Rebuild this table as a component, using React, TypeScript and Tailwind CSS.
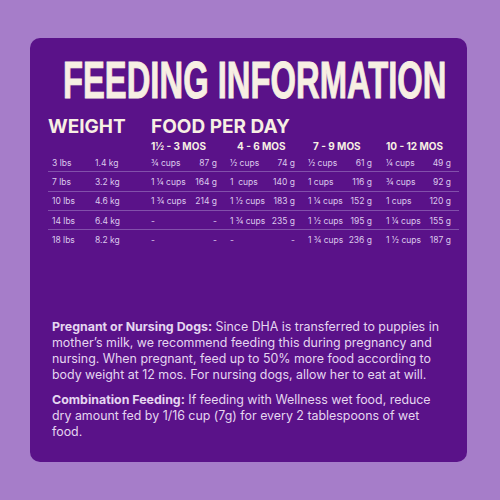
const rows = [
  { lbs: '3 lbs', kg: '1.4 kg', food: [['¾ cups', '87 g'], ['½ cups', '74 g'], ['½ cups', '61 g'], ['¼ cups', '49 g']] },
  { lbs: '7 lbs', kg: '3.2 kg', food: [['1 ¼ cups', '164 g'], ['1  cups', '140 g'], ['1 cups', '116 g'], ['¾ cups', '92 g']] },
  { lbs: '10 lbs', kg: '4.6 kg', food: [['1 ¾ cups', '214 g'], ['1 ½ cups', '183 g'], ['1 ¼ cups', '152 g'], ['1 cups', '120 g']] },
  { lbs: '14 lbs', kg: '6.4 kg', food: [['-', '-'], ['1 ¾ cups', '235 g'], ['1 ½ cups', '195 g'], ['1 ¼ cups', '155 g']] },
  { lbs: '18 lbs', kg: '8.2 kg', food: [['-', '-'], ['-', '-'], ['1 ¾ cups', '236 g'], ['1 ½ cups', '187 g']] },
];

const ages = ['1½ - 3 MOS', '4 - 6 MOS', '7 - 9 MOS', '10 - 12 MOS'];
const foodWidths = ['w-[66px]', 'w-[65px]', 'w-[64px]', 'w-[65px]'];

export default function App() {
  return (
    <div
      className="w-[500px] h-[500px] bg-[#a67dc9] pt-[38px] pl-[30px]"
      style={{ fontFamily: 'Inter, "Liberation Sans", sans-serif' }}
    >
      <div className="w-[437px] h-[424px] rounded-[10px] bg-[#5a1289] flex flex-col">
        {/* title */}
        <div className="pt-[16px] pl-[33px] h-[80px] overflow-hidden">
          <div
            className="inline-block origin-left scale-x-[0.63] text-[52px] leading-[52px] font-bold text-[#f7efe3] whitespace-nowrap [-webkit-text-stroke:1px_#f7efe3]"
            style={{ fontFamily: '"Liberation Sans", Arial, sans-serif' }}
          >
            FEEDING INFORMATION
          </div>
        </div>

        {/* table */}
        <div className="pl-[18px]">
          <div className="flex text-[19px] font-bold text-[#f7efe3] leading-[20px] -mt-[1px]">
            <div className="w-[103px]">WEIGHT</div>
            <div>FOOD PER DAY</div>
          </div>
          <div className="grid grid-cols-[47px_56px_79px_78px_78px_73px] w-[411px] text-[10px] font-bold text-[#f7efe3] mt-[2px] leading-[14px]">
            <div />
            <div />
            {ages.map((a, i) => (
              <div key={a} className={i === 1 ? 'pl-[7px]' : i === 2 ? 'pl-[5px]' : ''}>
                {a}
              </div>
            ))}
          </div>
          <div className="w-[411px] text-[8.5px] text-[#dcc9ec]">
            {rows.map((r, ri) => (
              <div
                key={r.lbs}
                className={
                  'grid grid-cols-[47px_56px_79px_78px_78px_73px] h-[19.3px] items-center pt-[2px] ' +
                  (ri < rows.length - 1 ? 'border-b border-[#8250ab]' : '')
                }
              >
                <div className="pl-[4px]">{r.lbs}</div>
                <div>{r.kg}</div>
                {r.food.map((f, fi) => (
                  <div key={fi} className={'flex justify-between whitespace-pre ' + foodWidths[fi]}>
                    <span>{f[0]}</span>
                    <span>{f[1]}</span>
                  </div>
                ))}
              </div>
            ))}
          </div>
        </div>

        {/* notes */}
        <div className="mt-auto mb-[22px] pl-[22px] w-[416px] text-[12.4px] leading-[16px] text-[#e5d6f0] flex flex-col gap-[9px]">
          <p>
            <span className="font-bold">Pregnant or Nursing Dogs:</span> Since DHA is transferred to puppies in
            mother’s milk, we recommend feeding this during pregnancy and nursing. When pregnant, feed up to 50%
            more food according to body weight at 12 mos. For nursing dogs, allow her to eat at will.
          </p>
          <p>
            <span className="font-bold">Combination Feeding:</span> If feeding with Wellness wet food, reduce dry
            amount fed by 1/16 cup (7g) for every 2 tablespoons of wet food.
          </p>
        </div>
      </div>
    </div>
  );
}
